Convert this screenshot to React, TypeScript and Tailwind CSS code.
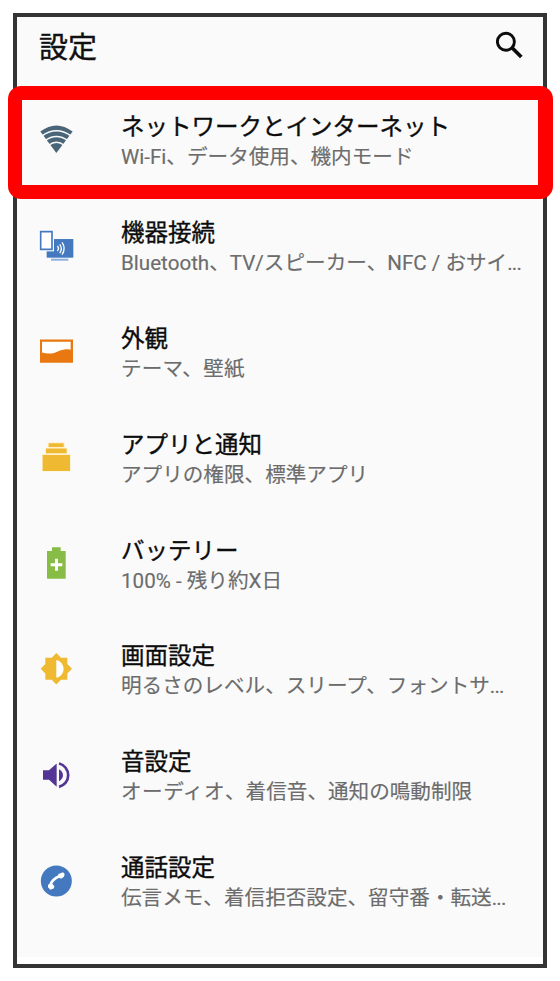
import type { ReactNode } from "react";

type Item = { title: string; summary: ReactNode; viewBox: string; icon: ReactNode };

const Dots = () => <span className="tracking-[-0.8px]">...</span>;

const items: Item[] = [
  {
    title: "ネットワークとインターネット",
    summary: "Wi-Fi、データ使用、機内モード",
    viewBox: "18 28.2 120 120",
    icon: (
      <g>
        <path d="M31 66Q79 30 128 66L79 130Z" fill="#4b6578" />
        <g fill="none" stroke="#fafafa" strokeWidth="4.5">
          <path d="M36 79Q79 48 123 79" />
          <path d="M45 93Q79 68 114 93" />
          <path d="M56 107Q79 89 103 107" />
        </g>
      </g>
    ),
  },
  {
    title: "機器接続",
    summary: (
      <>
        Bluetooth、TV/スピーカー、NFC / おサイ<Dots />
      </>
    ),
    viewBox: "18 30.9 120 120",
    icon: (
      <g>
        <path d="M50 73H130V129H50Z" fill="#4479bf" />
        <path d="M63 132H115V138H63Z" fill="#8fb0dc" />
        <path d="M26 44H72V110H26Z" fill="#fff" />
        <path d="M32 51H66V104H32Z" fill="#fff" stroke="#4479bf" strokeWidth="5" />
        <g fill="none" stroke="#fff" strokeWidth="4">
          <path d="M82 94Q89 101 82 109" />
          <path d="M89 89Q99 101 89 115" />
          <path d="M96 83Q109 101 96 120" />
        </g>
      </g>
    ),
  },
  {
    title: "外観",
    summary: <span className="tracking-[0.2px]">テーマ、壁紙</span>,
    viewBox: "18 33.6 120 120",
    icon: (
      <g>
        <path d="M30 59H129V129H30Z" fill="#e97810" />
        <path d="M36 66H122V90C92 83 82 102 62 101Q48 102 36 98Z" fill="#fff" />
      </g>
    ),
  },
  {
    title: "アプリと通知",
    summary: "アプリの権限、標準アプリ",
    viewBox: "18 21.3 120 120",
    icon: (
      <g>
        <path d="M53 37H104V54H112V71H122V125H36V71H46V54H53Z" fill="#fff1ce" />
        <path d="M56 40H101V51H56ZM48 56H110V70H48ZM38 75H120V123H38Z" fill="#efb931" />
      </g>
    ),
  },
  {
    title: "バッテリー",
    summary: "100% - 残り約X日",
    viewBox: "18 24 120 120",
    icon: (
      <g>
        <path d="M66 37H92V48H107V131H51V48H66Z" fill="#87bd47" />
        <path d="M62 89H97M79.5 71V107" stroke="#fff" strokeWidth="9" />
      </g>
    ),
  },
  {
    title: "画面設定",
    summary: (
      <>
        明るさのレベル、スリープ、フォントサ<Dots />
      </>
    ),
    viewBox: "18 26.7 120 120",
    icon: (
      <g>
        <path d="M79 39L93 53H112V72L126 86L112 100V119H93L79 133L65 119H46V100L32 86L46 72V53H65Z" fill="#efb931" />
        <path d="M79 60A27 27 0 0 1 79 113Z" fill="#fff" />
      </g>
    ),
  },
  {
    title: "音設定",
    summary: (
      <>
        <span className="tracking-[0.5px]">オーディオ</span>、着信音、通知の鳴動制限
      </>
    ),
    viewBox: "18 29.4 120 120",
    icon: (
      <g fill="#523594">
        <path d="M39 75H57L80 55V125L57 104H39Z" />
        <path d="M87 72Q99 79 99 90Q99 101 87 108Z" />
        <path d="M87 55A36 36 0 0 1 87 125" fill="none" stroke="#523594" strokeWidth="8" />
      </g>
    ),
  },
  {
    title: "通話設定",
    summary: (
      <>
        伝言メモ、着信拒否設定、留守番・転送<Dots />
      </>
    ),
    viewBox: "18 32.1 120 120",
    icon: (
      <g>
        <circle cx="79" cy="92" r="46.5" fill="#4479bf" />
        <path d="M61 105Q65 87 89 77" fill="none" stroke="#fff" strokeWidth="8" />
        <path d="M54 103L65 99L73 107L72 114L61 118L54 111ZM85 71L99 66L104 71L102 79L93 85L85 80Z" fill="#fff" />
      </g>
    ),
  },
];

export default function App() {
  return (
    <div className="relative h-[981px] w-[560px] overflow-hidden bg-white pt-[13px] pl-[13px] font-['Roboto','Noto_Sans_CJK_JP',sans-serif]">
      <div className="h-[955px] w-[534px] border-4 border-[#343434] bg-white">
        <div className="h-[940px] bg-[#fafafa]">
          <header className="flex h-[71px] items-start justify-between pl-[22px] pr-[19px]">
            <h1 className="pt-[10px] text-[29px] leading-[42px] text-[#111] [-webkit-text-stroke:0.4px_#111]">設定</h1>
            <svg className="mt-[14px] size-[28px]" viewBox="0 0 28 28" fill="none" stroke="#0c0c0c">
              <circle cx="9.9" cy="10.7" r="8.5" strokeWidth="2.9" />
              <path d="M16.3 17L25.3 26" strokeWidth="3.7" />
            </svg>
          </header>
          <ul>
            {items.map((item) => (
              <li key={item.title} className="flex h-[105.9px] items-start pl-[19px]">
                <svg className="mt-[31.4px] size-[40px] shrink-0" viewBox={item.viewBox}>
                  {item.icon}
                </svg>
                <div className="ml-[45px] pt-[24px] whitespace-nowrap">
                  <div className="text-[23.5px] leading-[30px] text-[#0c0c0c] [-webkit-text-stroke:0.35px_#0c0c0c]">{item.title}</div>
                  <div className="text-[20.6px] leading-[30px] text-[#6c6c6c] [-webkit-text-stroke:0.15px_#6c6c6c]">{item.summary}</div>
                </div>
              </li>
            ))}
          </ul>
        </div>
      </div>
      <div className="absolute top-[86px] left-[8px] h-[113px] w-[545px] rounded-[13px] border-[14px] border-r-[15px] border-[#ff0000]" />
    </div>
  );
}
